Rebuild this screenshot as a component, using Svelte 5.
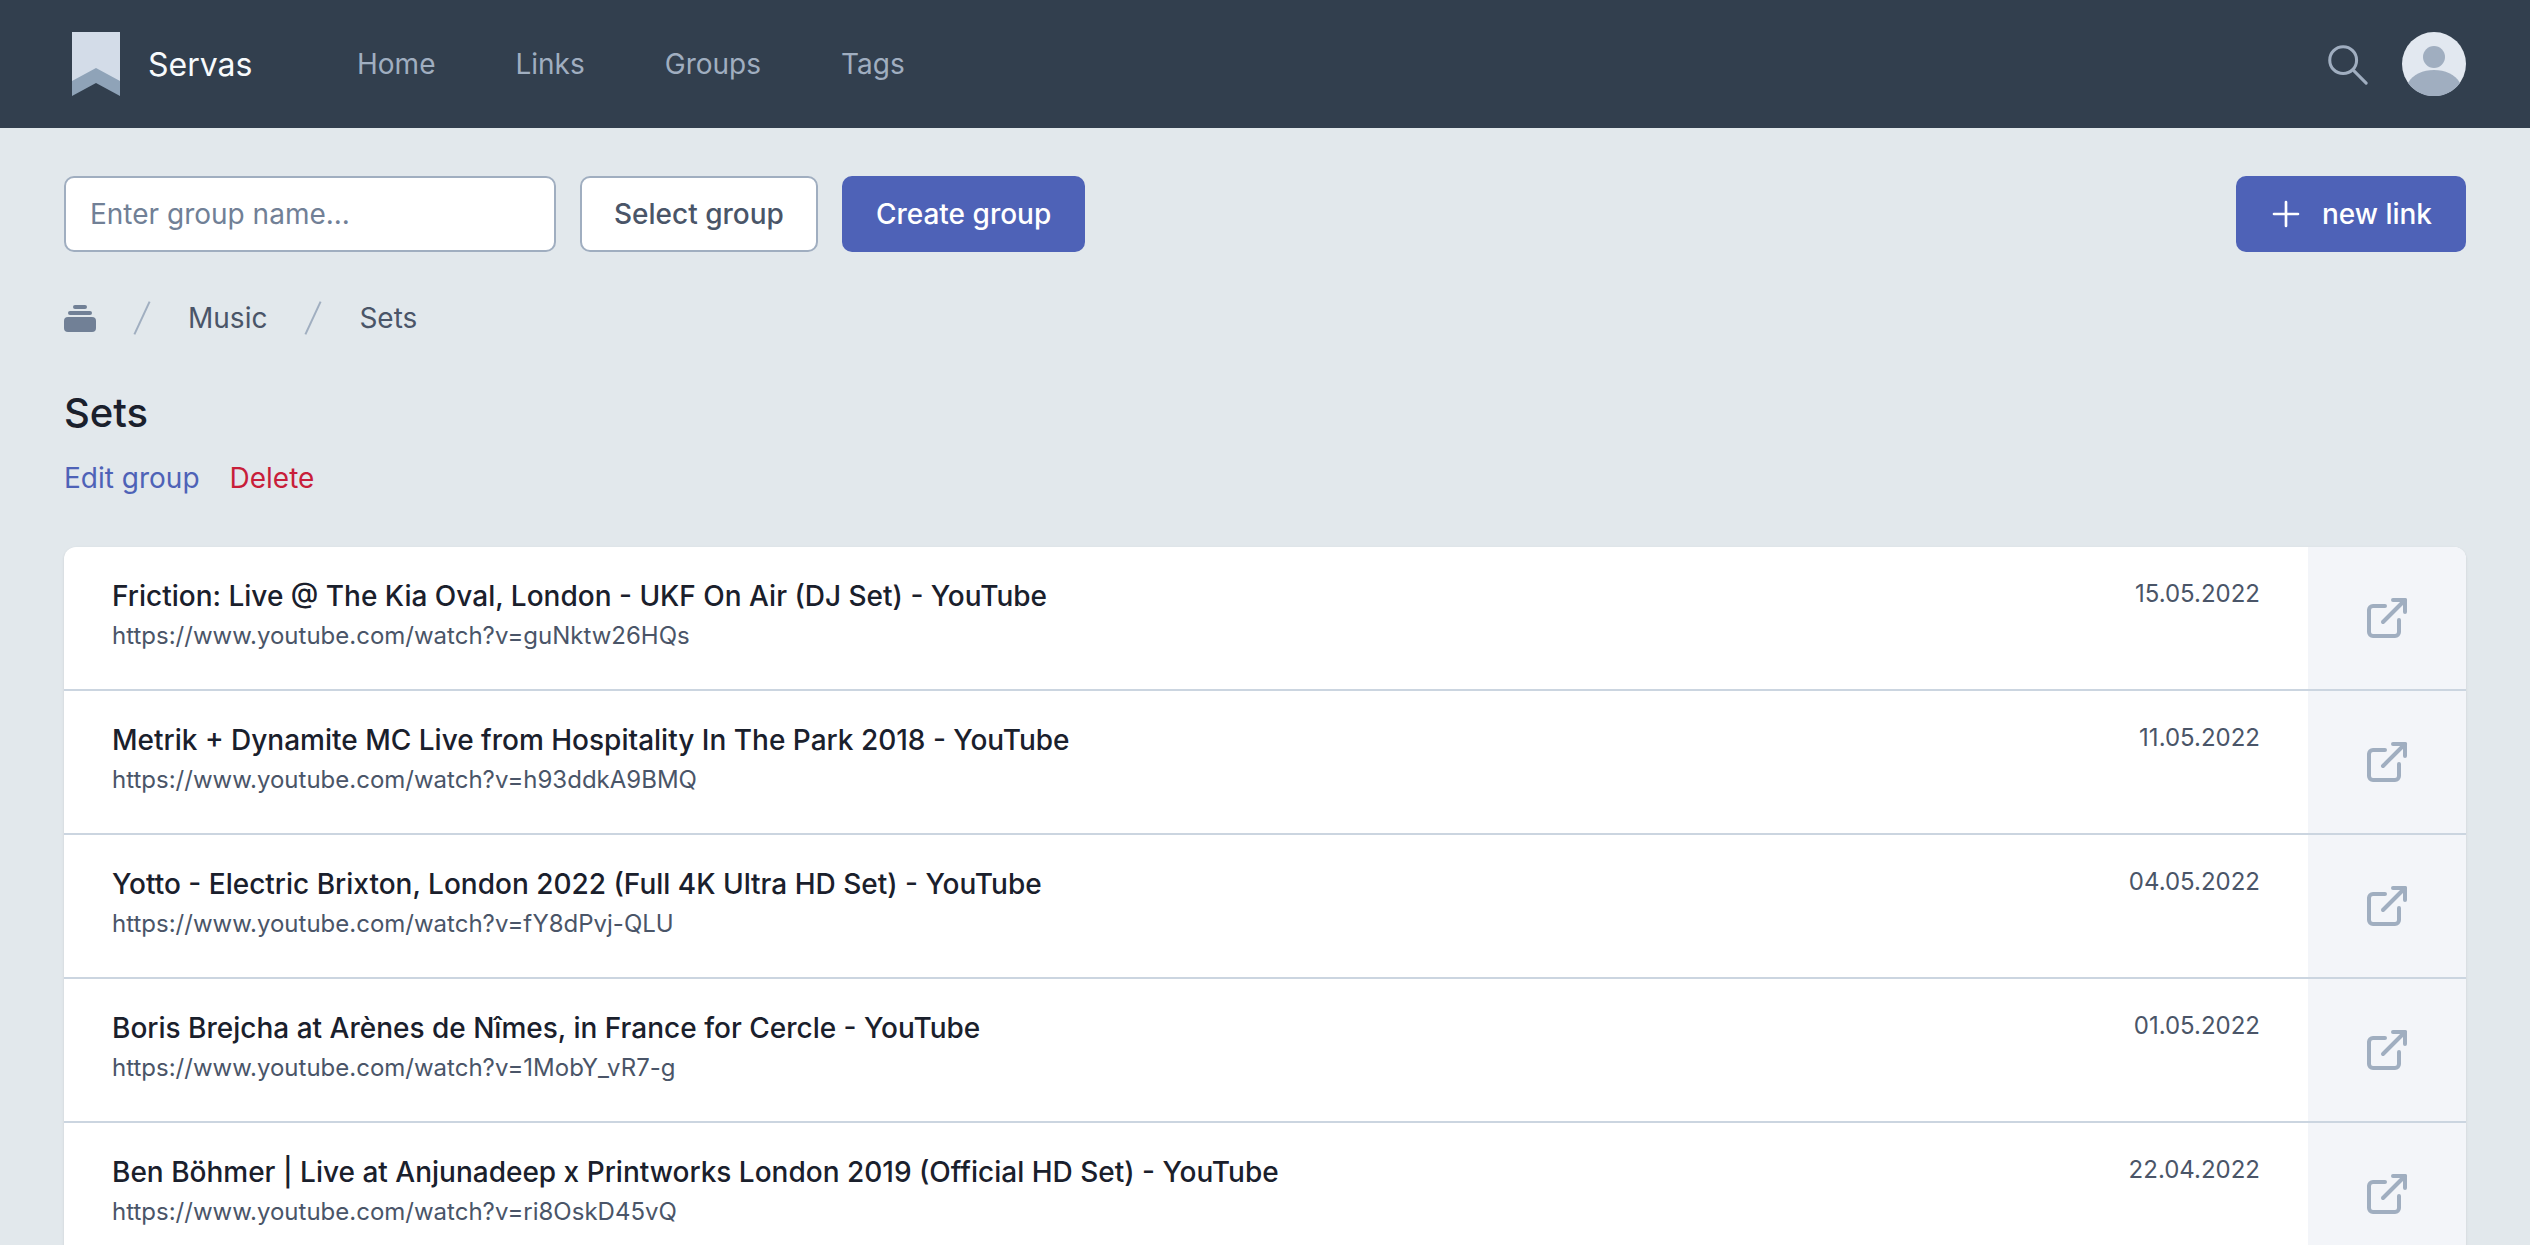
<script>
  const links = [
    { title: 'Friction: Live @ The Kia Oval, London - UKF On Air (DJ Set) - YouTube', url: 'https://www.youtube.com/watch?v=guNktw26HQs', date: '15.05.2022' },
    { title: 'Metrik + Dynamite MC Live from Hospitality In The Park 2018 - YouTube', url: 'https://www.youtube.com/watch?v=h93ddkA9BMQ', date: '11.05.2022' },
    { title: 'Yotto - Electric Brixton, London 2022 (Full 4K Ultra HD Set) - YouTube', url: 'https://www.youtube.com/watch?v=fY8dPvj-QLU', date: '04.05.2022' },
    { title: 'Boris Brejcha at Arènes de Nîmes, in France for Cercle - YouTube', url: 'https://www.youtube.com/watch?v=1MobY_vR7-g', date: '01.05.2022' },
    { title: 'Ben Böhmer | Live at Anjunadeep x Printworks London 2019 (Official HD Set) - YouTube', url: 'https://www.youtube.com/watch?v=ri8OskD45vQ', date: '22.04.2022' }
  ];
</script>

<header class="top">
  <div class="logo">
    <svg class="mark" viewBox="0 0 48 64" width="48" height="64">
      <path d="M0 0h48v60L24 47 0 60z" fill="#d3dcE8" />
      <path d="M0 49l24-13 24 13v15L24 51 0 64z" fill="#8fa3b8" />
    </svg>
    <span class="brand">Servas</span>
  </div>
  <nav class="nav">
    <span>Home</span>
    <span>Links</span>
    <span>Groups</span>
    <span>Tags</span>
  </nav>
  <div class="right">
    <svg viewBox="0 0 24 24" width="46" height="46" fill="none" stroke="#a0aec0" stroke-width="1.6" stroke-linecap="round">
      <circle cx="10" cy="10" r="7" />
      <path d="M15.5 15.5L22 22" />
    </svg>
    <svg class="avatar" viewBox="0 0 64 64" width="64" height="64">
      <circle cx="32" cy="32" r="32" fill="#e2e8f0" />
      <circle cx="32" cy="25" r="11" fill="#a0aec0" />
      <path d="M6 51c5-9 15-13 26-13s21 4 26 13a32 32 0 0 1-52 0z" fill="#a0aec0" />
    </svg>
  </div>
</header>

<main class="page">
  <div class="toolbar">
    <input class="field" placeholder="Enter group name..." />
    <button class="btn plain">Select group</button>
    <button class="btn primary">Create group</button>
    <button class="btn primary add">
      <svg viewBox="0 0 24 24" width="32" height="32" fill="none" stroke="#fff" stroke-width="2" stroke-linecap="round"><path d="M12 3v18M3 12h18" /></svg>
      new link
    </button>
  </div>

  <div class="crumbs">
    <svg viewBox="0 0 32 28" width="32" height="28" fill="#718096">
      <rect x="0" y="13" width="32" height="15" rx="4" />
      <rect x="4" y="7" width="24" height="4" rx="2" />
      <rect x="9" y="1" width="14" height="4" rx="2" />
    </svg>
    <span class="sep"></span>
    <span>Music</span>
    <span class="sep"></span>
    <span>Sets</span>
  </div>

  <h1>Sets</h1>
  <div class="actions">
    <span class="edit">Edit group</span>
    <span class="del">Delete</span>
  </div>

  <ul class="list">
    {#each links as link}
      <li class="row">
        <div class="info">
          <div class="text">
            <div class="title">{link.title}</div>
            <div class="url">{link.url}</div>
          </div>
          <div class="date">{link.date}</div>
        </div>
        <div class="open">
          <svg viewBox="0 0 24 24" width="48" height="48" fill="none" stroke="#a0aec0" stroke-width="2" stroke-linecap="round" stroke-linejoin="round">
            <path d="M18 13v6a2 2 0 0 1-2 2H5a2 2 0 0 1-2-2V8a2 2 0 0 1 2-2h6" />
            <path d="M15 3h6v6" />
            <path d="M10 14L21 3" />
          </svg>
        </div>
      </li>
    {/each}
  </ul>
</main>

<style>
  :global(html), :global(body) {
    margin: 0;
    height: 1245px;
    overflow: hidden;
    background: #e2e8ec;
    font-family: Inter, "Liberation Sans", sans-serif;
  }
  .top {
    height: 128px;
    box-sizing: border-box;
    background: #323f4e;
    display: flex;
    align-items: center;
    padding: 0 64px 0 72px;
  }
  .logo { display: flex; align-items: center; gap: 28px; width: 285px; }
  .mark { display: block; }
  .brand { color: #f7fafc; font-size: 32px; }
  .nav { display: flex; gap: 80px; font-size: 28px; color: #a0aec0; }
  .right { margin-left: auto; display: flex; align-items: center; gap: 32px; }
  .page { padding: 48px 64px 0; }
  .toolbar { display: flex; align-items: stretch; gap: 24px; }
  .field {
    width: 492px;
    height: 76px;
    box-sizing: border-box;
    padding: 0 24px;
    border: 2px solid #a0aec0;
    border-radius: 10px;
    font: 28px Inter, sans-serif;
    color: #4a5568;
  }
  .field::placeholder { color: #718096; opacity: 1; }
  .btn {
    height: 76px;
    border-radius: 10px;
    font: 500 28px Inter, sans-serif;
    padding: 0 32px;
    border: 2px solid transparent;
  }
  .plain { background: #fff; border-color: #a0aec0; color: #4a5568; }
  .primary { background: #4e62b7; color: #fff; }
  .add { margin-left: auto; display: flex; align-items: center; gap: 20px; }
  .crumbs { display: flex; align-items: center; gap: 45px; margin-top: 48px; font-size: 28px; color: #4a5568; }
  .sep { width: 2px; height: 36px; background: #a0aec0; transform: rotate(25deg); }
  h1 { font-size: 40px; font-weight: 500; color: #1a202c; margin: 52px 0 0; }
  .actions { display: flex; gap: 30px; margin-top: 24px; font-size: 28px; }
  .edit { color: #4e62b7; }
  .del { color: #c81e3a; }
  .list { list-style: none; margin: 52px 0 0; padding: 0; background: #fff; border-radius: 12px 12px 0 0; overflow: hidden; box-shadow: 0 1px 3px rgb(0 0 0 / 0.1); }
  .row { display: flex; height: 142px; border-bottom: 2px solid #cbd5e0; }
  .info { flex: 1; display: flex; justify-content: space-between; padding: 32px 48px; }
  .title { font-size: 28px; font-weight: 500; color: #1a202c; }
  .url { font-size: 24px; color: #4a5568; margin-top: 8px; }
  .date { font-size: 24px; color: #4a5568; }
  .open { width: 158px; background: #f3f5f9; display: flex; align-items: center; justify-content: center; }
</style>
